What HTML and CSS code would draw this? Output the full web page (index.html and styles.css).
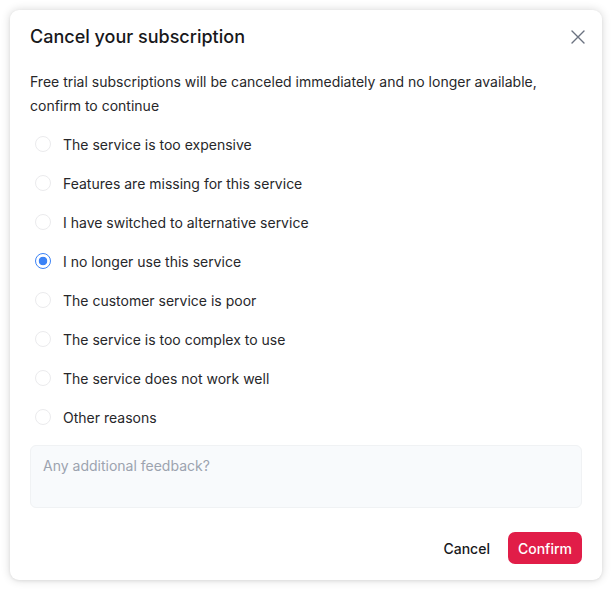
FILE: index.html
```html
<!DOCTYPE html>
<html lang="en">
<head>
<meta charset="utf-8">
<title>Cancel your subscription</title>
<link rel="stylesheet" href="styles.css">
</head>
<body>
<div class="dialog">
  <div class="dialog-header">
    <h2 class="dialog-title">Cancel your subscription</h2>
    <button class="close-btn" aria-label="Close">
      <svg width="20" height="20" viewBox="0 0 20 20" fill="none" stroke="#6b7280" stroke-width="1.4" stroke-linecap="round"><path d="M4 4L16 16M16 4L4 16"/></svg>
    </button>
  </div>
  <p class="dialog-desc">Free trial subscriptions will be canceled immediately and no longer available, confirm to continue</p>
  <div class="options">
    <label class="option"><span class="radio"></span><span class="option-text">The service is too expensive</span></label>
    <label class="option"><span class="radio"></span><span class="option-text">Features are missing for this service</span></label>
    <label class="option"><span class="radio"></span><span class="option-text">I have switched to alternative service</span></label>
    <label class="option"><span class="radio radio-checked"></span><span class="option-text">I no longer use this service</span></label>
    <label class="option"><span class="radio"></span><span class="option-text">The customer service is poor</span></label>
    <label class="option"><span class="radio"></span><span class="option-text">The service is too complex to use</span></label>
    <label class="option"><span class="radio"></span><span class="option-text">The service does not work well</span></label>
    <label class="option"><span class="radio"></span><span class="option-text">Other reasons</span></label>
  </div>
  <div class="feedback">Any additional feedback?</div>
  <div class="dialog-footer">
    <button class="btn btn-ghost">Cancel</button>
    <button class="btn btn-primary">Confirm</button>
  </div>
</div>
</body>
</html>
```
FILE: styles.css
```css
* { box-sizing: border-box; }
html, body { margin: 0; padding: 0; background: #ffffff; }
body {
  font-family: Inter, "Noto Sans", "Liberation Sans", sans-serif;
  color: #27272a;
  padding: 10px;
}
.dialog {
  width: 592px;
  height: 570px;
  background: #fff;
  border-radius: 9px;
  box-shadow: 0 0 10px rgba(0,0,0,0.16), 0 1px 3px rgba(0,0,0,0.06);
  padding: 13px 20px 16px 20px;
  display: flex;
  flex-direction: column;
}
.dialog-header {
  display: flex;
  align-items: center;
  justify-content: space-between;
  height: 28px;
}
.dialog-title {
  margin: 0;
  font-size: 18px;
  line-height: 28px;
  font-weight: 500;
  color: #18181b;
}
.close-btn {
  border: 0;
  background: none;
  padding: 0;
  width: 20px;
  height: 20px;
  margin-right: -6px;
  display: flex;
}
.dialog-desc {
  margin: 19px 0 0 0;
  font-size: 14px;
  line-height: 24px;
  color: #27272a;
}
.options {
  display: flex;
  flex-direction: column;
  gap: 15px;
  margin-top: 14px;
}
.option {
  display: flex;
  align-items: center;
  height: 24px;
  gap: 12px;
  padding-left: 5px;
  font-size: 14px;
  color: #27272a;
}
.radio {
  width: 16px;
  height: 16px;
  border-radius: 50%;
  border: 1px solid #ebebed;
  background: #fff;
  flex: none;
}
.radio-checked {
  border: 1.6px solid #3b82f6;
  background: radial-gradient(circle, #3b82f6 0 4px, #fff 4.6px);
}
.feedback {
  margin-top: 16px;
  height: 63px;
  background: #f8fafc;
  border: 1px solid #f0f2f4;
  border-radius: 6px;
  padding: 10px 12px;
  font-size: 14px;
  line-height: 20px;
  color: #9ca3af;
}
.dialog-footer {
  margin-top: 24px;
  display: flex;
  justify-content: flex-end;
  gap: 8px;
}
.btn {
  font-family: inherit;
  font-size: 14px;
  font-weight: 500;
  height: 32px;
  padding: 0 10px;
  border-radius: 7px;
  border: 0;
}
.btn-ghost {
  background: transparent;
  color: #18181b;
}
.btn-primary {
  background: #e11d48;
  color: #fff;
}
```
